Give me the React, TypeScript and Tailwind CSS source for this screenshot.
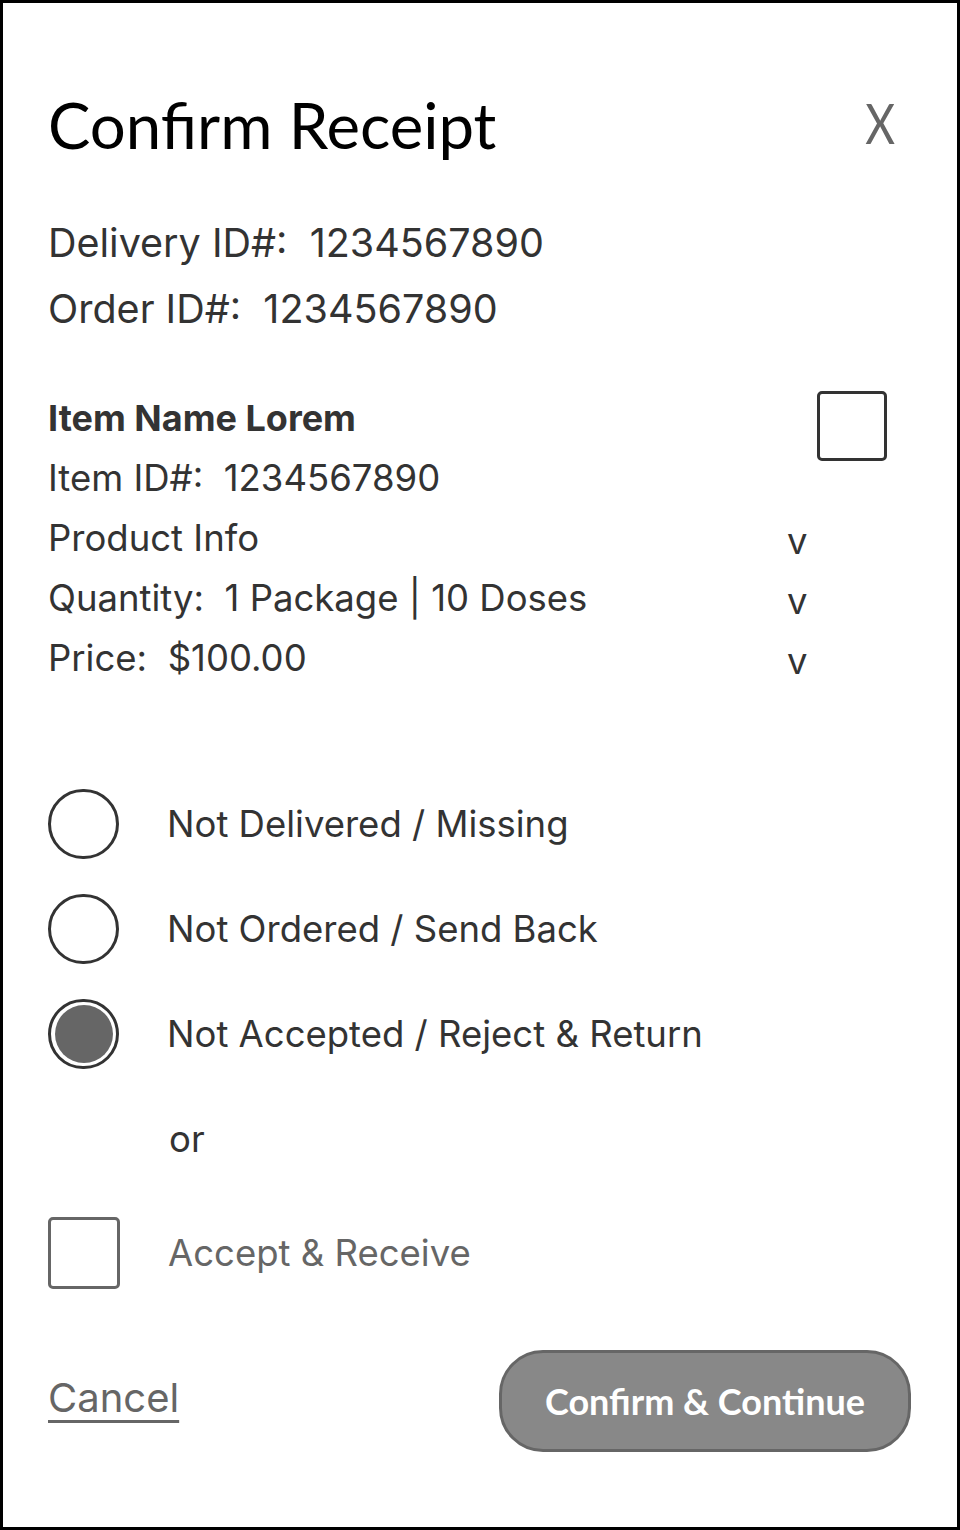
import React, { useState } from "react"

function Radio({ checked }: { checked?: boolean }) {
  return (
    <div className="flex h-[70px] w-[71px] shrink-0 items-center justify-center rounded-full border-[3px] border-[#333]">
      {checked && <div className="h-[58px] w-[58px] rounded-full bg-[#666]" />}
    </div>
  )
}

export default function App() {
  const [choice] = useState(2)
  const options = ["Not Delivered / Missing", "Not Ordered / Send Back", "Not Accepted / Reject & Return"]

  return (
    <div className="h-[1530px] w-[960px] border-[3px] border-black bg-white px-[45px] text-[#333] font-['Inter',sans-serif]">
      {/* Header */}
      <div className="flex items-start justify-between pt-[86px]">
        <h1 className="font-['Lato',sans-serif] text-[63.5px] leading-[72px] text-black">Confirm Receipt</h1>
        <button className="mr-[14px] inline-block scale-x-[0.82] font-['Lato',sans-serif] text-[56px] leading-[68px] text-[#666]">X</button>
      </div>

      {/* Ids */}
      <div className="mt-[57px] space-y-[16px] text-[39.5px] leading-[50px]">
        <p>Delivery ID#:&nbsp; 1234567890</p>
        <p>Order ID#:&nbsp; 1234567890</p>
      </div>

      {/* Item */}
      <div className="mt-[54px] flex text-[36.5px] leading-[60px]">
        <div className="flex-1">
          <p className="text-[36px] font-bold">Item Name Lorem</p>
          <p>Item ID#:&nbsp; 1234567890</p>
          <p>Product Info</p>
          <p>Quantity:&nbsp; 1 Package | 10 Doses</p>
          <p>Price:&nbsp; $100.00</p>
        </div>
        <div className="w-[125px]">
          <div className="h-[120px]">
            <div className="ml-[30px] mt-[3px] h-[70px] w-[70px] rounded-[5px] border-[3px] border-[#333]" />
          </div>
          <div>v</div>
          <div>v</div>
          <div>v</div>
        </div>
      </div>

      {/* Options */}
      <div className="mt-[98px] space-y-[35px]">
        {options.map((o, i) => (
          <div key={o} className="flex items-center gap-[48px]">
            <Radio checked={i === choice} />
            <span className="text-[36.5px]">{o}</span>
          </div>
        ))}
      </div>

      <p className="ml-[121px] mt-[45px] text-[36.5px] leading-[50px]">or</p>

      <div className="mt-[53px] flex items-center gap-[48px]">
        <div className="h-[72px] w-[72px] rounded-[5px] border-[3px] border-[#666]" />
        <span className="text-[36.5px] text-[#666]">Accept &amp; Receive</span>
      </div>

      {/* Footer */}
      <div className="mt-[61px] flex items-center justify-between pr-[1px]">
        <a className="mt-[-6px] text-[40px] text-[#666] underline decoration-[3px] underline-offset-[8px]">Cancel</a>
        <button className="h-[102px] w-[412px] rounded-[44px] border-[3px] border-[#666] bg-[#888] font-['Lato',sans-serif] text-[36px] font-bold text-white">
          Confirm &amp; Continue
        </button>
      </div>
    </div>
  )
}
